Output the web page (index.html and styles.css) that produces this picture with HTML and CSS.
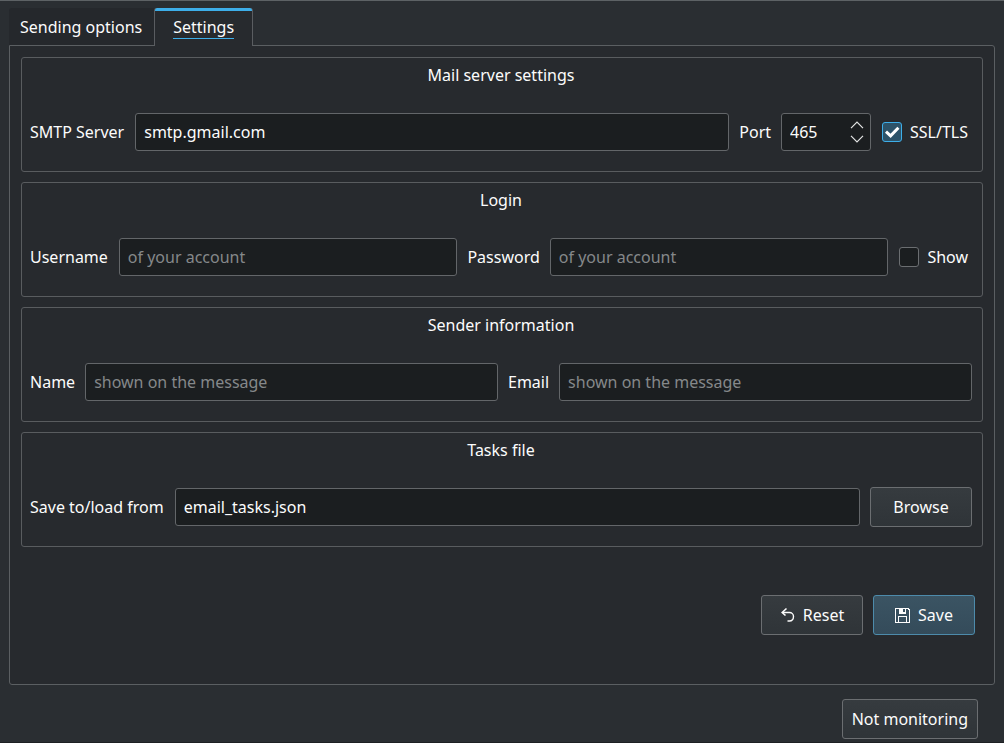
FILE: index.html
```html
<!DOCTYPE html>
<html lang="en">
<head>
<meta charset="utf-8">
<meta name="viewport" content="width=device-width, initial-scale=1">
<title>Email settings</title>
<link rel="stylesheet" href="styles.css">
</head>
<body>
<div class="window">
  <div class="tabs" role="tablist">
    <button class="tab" type="button" role="tab" aria-selected="false">Sending options</button>
    <button class="tab tab-active" type="button" role="tab" aria-selected="true"><span class="tab-text">Settings</span></button>
  </div>
  <form class="panel" role="tabpanel">
    <fieldset class="group" aria-labelledby="mail-title">
      <h2 class="group-title" id="mail-title">Mail server settings</h2>
      <div class="row">
        <label class="label" for="server">SMTP Server</label>
        <input class="field" id="server" type="text" value="smtp.gmail.com">
        <label for="port">Port</label>
        <div class="spin">
          <input class="spin-value" id="port" type="number" value="465">
          <div class="spin-buttons">
            <button class="spin-button" type="button" aria-label="Increase"><svg width="14" height="8" viewBox="0 0 14 8"><path d="M1 7.2 7 1.2l6 6"/></svg></button>
            <button class="spin-button" type="button" aria-label="Decrease"><svg width="14" height="8" viewBox="0 0 14 8"><path d="m1 .8 6 6 6-6"/></svg></button>
          </div>
        </div>
        <label class="check"><input class="box" type="checkbox" checked><svg class="tick" width="20" height="20" viewBox="0 0 20 20"><path d="m4 9.700 4.600 4.200L16.400 5.800"/></svg><span>SSL/TLS</span></label>
      </div>
    </fieldset>
    <fieldset class="group" aria-labelledby="login-title">
      <h2 class="group-title" id="login-title">Login</h2>
      <div class="row">
        <label class="label" for="user">Username</label>
        <input class="field" id="user" type="text" placeholder="of your account">
        <label for="pass">Password</label>
        <input class="field" id="pass" type="password" placeholder="of your account">
        <label class="check"><input class="box" type="checkbox"><span>Show</span></label>
      </div>
    </fieldset>
    <fieldset class="group" aria-labelledby="sender-title">
      <h2 class="group-title" id="sender-title">Sender information</h2>
      <div class="row">
        <label for="name">Name</label>
        <input class="field" id="name" type="text" placeholder="shown on the message">
        <label for="email">Email</label>
        <input class="field" id="email" type="email" placeholder="shown on the message">
      </div>
    </fieldset>
    <fieldset class="group" aria-labelledby="tasks-title">
      <h2 class="group-title" id="tasks-title">Tasks file</h2>
      <div class="row">
        <label class="label" for="file">Save to/load from</label>
        <input class="field" id="file" type="text" value="email_tasks.json">
        <button class="button" type="button">Browse</button>
      </div>
    </fieldset>
    <div class="actions">
      <button class="button" type="reset">
        <svg class="icon" width="16" height="16" viewBox="0 0 16 16" fill="none" stroke="#fcfcfc"><path d="M3 5.500h6.500a4 4 0 0 1 4 4c0 2.500-1.500 4.500-4 4.500H7.500" stroke-width="1.400"/><path d="M6.500 1.500 2.200 5.500l3.300 3" stroke-width="1.600"/></svg>
        <span>Reset</span>
      </button>
      <button class="button button-primary" type="submit">
        <svg class="icon" width="16" height="16" viewBox="0 0 16 16" shape-rendering="crispEdges"><path fill="#fcfcfc" fill-rule="evenodd" d="M0 1h13l2 2v13H0zM1 2v13h2V9h9v6h2V4l-2-2h-1v5H4V2zM8 2v3h2V2zM4 10v5h7v-5z"/></svg>
        <span>Save</span>
      </button>
    </div>
  </form>
  <div class="footer">
    <button class="button" type="button">Not monitoring</button>
  </div>
</div>
</body>
</html>
```
FILE: styles.css
```css
* {
  box-sizing: border-box;
}

body {
  margin: 0;
  background: #2a2e32;
  color: #fcfcfc;
  font: 16px/22px "Noto Sans", sans-serif;
}

button,
input {
  margin: 0;
  color: inherit;
  font: inherit;
}

.window {
  display: flex;
  flex-direction: column;
  min-height: 100vh;
  padding: 7px 9px 3px;
  border-top: 1px solid #5d6265;
  border-bottom: 1px solid #1d2023;
}

.tabs {
  display: flex;
}

.tab {
  height: 37px;
  padding: 0 12px 0 11px;
  border: 0;
  border-radius: 3px 0 0 0;
  background: #25282c;
}

.tab-active {
  height: 38px;
  margin-bottom: -1px;
  padding: 0 18px;
  border: solid #5a5d61;
  border-width: 0 1px;
  border-radius: 3px 3px 0 0;
  background: linear-gradient(#3daee9 3px, #272a2e 3px);
  z-index: 1;
}

.tab-text {
  display: block;
  border-bottom: 1px solid #3daee9;
}

.panel {
  display: flex;
  flex: 1;
  flex-direction: column;
  gap: 10px;
  padding: 11px;
  border: 1px solid #5b5f62;
  border-radius: 0 3px 3px 3px;
  background: #272a2e;
}

.group {
  min-width: 0;
  margin: 0;
  padding: 6px 10px 19px 8px;
  border: 1px solid #595c5f;
  border-radius: 3px;
}

.group-title {
  margin: 0 0 25px;
  font-size: 16px;
  font-weight: 400;
  text-align: center;
}

.row {
  display: flex;
  align-items: center;
  gap: 10px;
  min-height: 41px;
}

.label {
  padding-right: 1px;
}

.field {
  flex: 1;
  min-width: 0;
  height: 38px;
  padding: 0 8px;
  border: 1px solid #636669;
  border-radius: 3px;
  background: #1b1e20;
}

.field::placeholder {
  color: #85888a;
  opacity: 1;
}

.spin {
  display: flex;
  align-items: center;
  width: 90px;
  height: 38px;
  padding: 0 6px 0 8px;
  border: 1px solid #636669;
  border-radius: 3px;
  background: #1b1e20;
}

.spin-value {
  flex: 1;
  min-width: 0;
  padding: 0;
  border: 0;
  background: none;
  appearance: textfield;
}

.spin-value::-webkit-inner-spin-button {
  appearance: none;
}

.spin-buttons {
  display: grid;
  gap: 6px;
}

.spin-button {
  display: flex;
  padding: 0;
  border: 0;
  background: none;
}

.spin-button path {
  fill: none;
  stroke: #e4e5e5;
  stroke-width: 1.2;
}

.check {
  display: grid;
  grid-template-columns: 20px auto;
  align-items: center;
  gap: 8px;
  padding: 0 4px 0 1px;
}

.box {
  grid-area: 1 / 1;
  width: 20px;
  height: 20px;
  border: 1px solid #6b6e71;
  border-radius: 3px;
  background: #1b1e20;
  appearance: none;
}

.box:checked {
  border-color: #3daee9;
  background: #2d5369;
}

.tick {
  grid-area: 1 / 1;
  fill: none;
  stroke: #fff;
  stroke-width: 3;
  pointer-events: none;
}

.button {
  display: flex;
  align-items: center;
  justify-content: center;
  gap: 7px;
  min-width: 102px;
  height: 40px;
  padding: 0 9px;
  border: 1px solid #6b6e71;
  border-radius: 3px;
  background: linear-gradient(#363b3f, #2f3438);
}

.button-primary {
  border-color: #4d8bab;
  background: linear-gradient(#3b5463, #344b5a);
}

.actions {
  display: flex;
  justify-content: flex-end;
  gap: 10px;
  padding: 38px 8px 0 0;
}

.footer {
  display: flex;
  justify-content: flex-end;
  padding: 14px 17px 0 0;
}
```
